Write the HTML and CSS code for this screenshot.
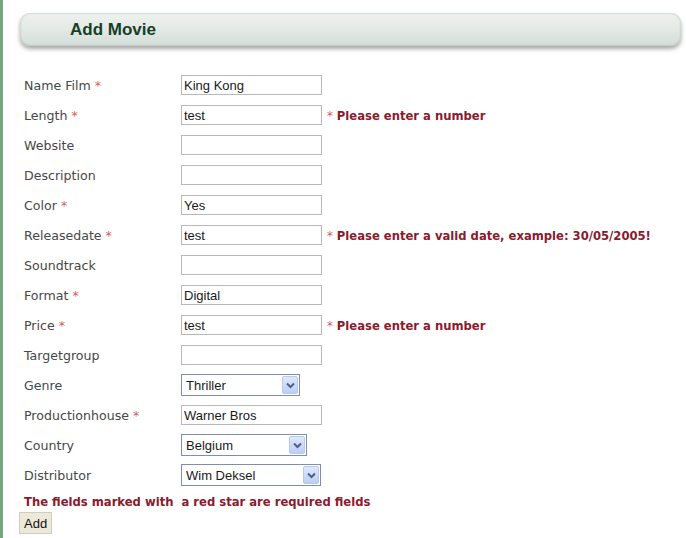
FILE: index.html
```html
<!DOCTYPE html>
<html>
<head>
<meta charset="utf-8">
<link rel="stylesheet" href="styles.css">
</head>
<body>
<div class="page">
  <div class="titlebar"><h1>Add Movie</h1></div>
  <form class="form">
    <div class="row"><label>Name Film <span class="star">*</span></label><input class="txt" value="King Kong"></div>
    <div class="row"><label>Length <span class="star">*</span></label><input class="txt" value="test"><span class="err"><span class="star">*</span> Please enter a number</span></div>
    <div class="row"><label>Website</label><input class="txt" value=""></div>
    <div class="row"><label>Description</label><input class="txt" value=""></div>
    <div class="row"><label>Color <span class="star">*</span></label><input class="txt" value="Yes"></div>
    <div class="row"><label>Releasedate <span class="star">*</span></label><input class="txt" value="test"><span class="err"><span class="star">*</span> Please enter a valid date, example: 30/05/2005!</span></div>
    <div class="row"><label>Soundtrack</label><input class="txt" value=""></div>
    <div class="row"><label>Format <span class="star">*</span></label><input class="txt" value="Digital"></div>
    <div class="row"><label>Price <span class="star">*</span></label><input class="txt" value="test"><span class="err"><span class="star">*</span> Please enter a number</span></div>
    <div class="row"><label>Targetgroup</label><input class="txt" value=""></div>
    <div class="row"><label>Genre</label>
      <div class="sel w-genre"><span class="selval">Thriller</span><span class="arrow"><svg width="9" height="7" viewBox="0 0 9 7"><path d="M1 1.5 L4.5 5 L8 1.5" fill="none" stroke="#4d6185" stroke-width="2"/></svg></span></div>
    </div>
    <div class="row"><label>Productionhouse <span class="star">*</span></label><input class="txt" value="Warner Bros"></div>
    <div class="row"><label>Country</label>
      <div class="sel w-country"><span class="selval">Belgium</span><span class="arrow"><svg width="9" height="7" viewBox="0 0 9 7"><path d="M1 1.5 L4.5 5 L8 1.5" fill="none" stroke="#4d6185" stroke-width="2"/></svg></span></div>
    </div>
    <div class="row"><label>Distributor</label>
      <div class="sel w-dist"><span class="selval">Wim Deksel</span><span class="arrow"><svg width="9" height="7" viewBox="0 0 9 7"><path d="M1 1.5 L4.5 5 L8 1.5" fill="none" stroke="#4d6185" stroke-width="2"/></svg></span></div>
    </div>
    <p class="note">The fields marked with &nbsp;a red star are required fields</p>
    <button type="button" class="btn">Add</button>
  </form>
</div>
</body>
</html>
```
FILE: styles.css
```css
html, body {
  margin: 0;
  padding: 0;
  background: #ffffff;
}
.page {
  border-left: 3px solid #77a586;
  min-height: 538px;
  box-sizing: border-box;
  padding: 13px 5px 0 17px;
}
.titlebar {
  height: 33px;
  border-radius: 10px;
  background: linear-gradient(#eef2ef 0%, #e3e9e5 50%, #d3ddd7 100%);
  box-shadow: 0 3px 4px rgba(0, 0, 0, 0.35), inset 0 0 2px rgba(120, 130, 125, 0.6);
  display: flex;
  align-items: center;
  padding-left: 50px;
}
.titlebar h1 {
  margin: 0;
  font-family: "Liberation Sans", Arial, sans-serif;
  font-weight: bold;
  font-size: 17px;
  color: #173f27;
  letter-spacing: 0;
}
.form {
  margin: 24px 0 0 4px;
  display: flex;
  flex-direction: column;
}
.row {
  height: 30px;
  display: flex;
  align-items: center;
}
.row label {
  width: 157px;
  flex: none;
  padding-top: 1px;
  font-family: "DejaVu Sans", Verdana, sans-serif;
  font-size: 12.6px;
  color: #474747;
}
.star {
  color: #d36060;
}
.txt {
  box-sizing: border-box;
  width: 141px;
  height: 20px;
  border: 1px solid #b8b8b8;
  padding: 0 2px;
  margin: 0;
  font-family: "Liberation Sans", Arial, sans-serif;
  font-size: 13px;
  color: #1a1a1a;
  background: #fff;
  outline: none;
}
.err {
  margin-left: 5px;
  font-family: "DejaVu Sans", Verdana, sans-serif;
  font-size: 11.6px;
  font-weight: bold;
  color: #8a1a2e;
  padding-top: 2px;
}
.err .star {
  font-weight: normal;
  color: #d36060;
}
.sel {
  position: relative;
  box-sizing: border-box;
  height: 22px;
  border: 1px solid #7f8db0;
  display: flex;
  align-items: center;
  justify-content: space-between;
  background: #fff;
  padding: 0 1px 0 4px;
}
.w-genre { width: 119px; }
.w-country { width: 126px; }
.w-dist { width: 140px; }
.selval {
  font-family: "Liberation Sans", Arial, sans-serif;
  font-size: 13px;
  color: #1a1a1a;
}
.arrow {
  width: 16px;
  height: 18px;
  box-sizing: border-box;
  border: 1px solid #b9c9ee;
  border-radius: 2px;
  background: linear-gradient(#dfe8fd, #bccdf6);
  display: flex;
  align-items: center;
  justify-content: center;
}
.note {
  margin: 5px 0 3px 0;
  font-family: "DejaVu Sans", Verdana, sans-serif;
  font-size: 11.6px;
  font-weight: bold;
  color: #8a1a2e;
}
.btn {
  align-self: flex-start;
  margin-left: -5px;
  height: 22px;
  padding: 0 4px;
  border: 1px solid #d0cec0;
  background: #ece9d8;
  font-family: "Liberation Sans", Arial, sans-serif;
  font-size: 13px;
  color: #111;
}
```
